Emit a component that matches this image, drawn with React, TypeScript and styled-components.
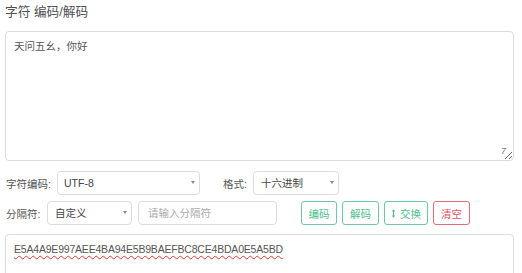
import React, { useState } from "react";
import styled, { createGlobalStyle } from "styled-components";

const Global = createGlobalStyle`
  html, body { margin: 0; padding: 0; background: #fff; }
  body { font-family: "Liberation Sans", "Noto Sans CJK SC", sans-serif; color: #555; }
  * { box-sizing: border-box; }
`;

const Page = styled.div`
  width: 522px;
  padding: 2px 8px 0 5px;
  display: flex;
  flex-direction: column;
`;

const Title = styled.h3`
  margin: 0;
  font-size: 12.7px;
  font-weight: normal;
  line-height: 20px;
  color: #505050;
`;

const AreaWrap = styled.div<{ $mt: number }>`
  position: relative;
  margin-top: ${(p) => p.$mt}px;
`;

const Area = styled.textarea<{ $h: number; $wavy?: boolean }>`
  display: block;
  width: 509px;
  height: ${(p) => p.$h}px;
  border: 1px solid #dcdcdc;
  border-radius: 4px;
  padding: 6px 8px;
  font-family: "Liberation Sans", "Noto Sans CJK SC", sans-serif;
  font-size: 10.5px;
  line-height: 16px;
  letter-spacing: ${(p) => (p.$wavy ? "-0.2px" : "0")};
  color: #555;
  outline: none;
  resize: vertical;
  text-decoration: ${(p) => (p.$wavy ? "underline wavy #e53935" : "none")};
  text-underline-offset: 2px;
  text-decoration-thickness: 1px;
`;

const Counter = styled.span`
  position: absolute;
  right: 8px;
  bottom: 5px;
  font-size: 9px;
  font-style: italic;
  color: #777;
`;

const Row = styled.div<{ $mt: number }>`
  display: flex;
  align-items: center;
  margin-top: ${(p) => p.$mt}px;
  height: 24px;
`;

const Label = styled.span<{ $w: number; $ml?: number }>`
  width: ${(p) => p.$w}px;
  margin-left: ${(p) => p.$ml ?? 0}px;
  padding-left: 1px;
  font-size: 10.5px;
  color: #555;
  white-space: nowrap;
  flex: none;
`;

const SelectBox = styled.div<{ $w: number }>`
  position: relative;
  width: ${(p) => p.$w}px;
  height: 24px;
  flex: none;
`;

const NativeSelect = styled.select<{ $pl: number }>`
  appearance: none;
  width: 100%;
  height: 100%;
  border: 1px solid #dcdcdc;
  border-radius: 4px;
  background: #fff;
  padding: 0 18px 0 ${(p) => p.$pl}px;
  font-family: "Liberation Sans", "Noto Sans CJK SC", sans-serif;
  font-size: 10.5px;
  color: #444;
  outline: none;
`;

const Caret = styled.span`
  position: absolute;
  right: 5px;
  top: 10px;
  width: 0;
  height: 0;
  border-left: 2.5px solid transparent;
  border-right: 2.5px solid transparent;
  border-top: 3.5px solid #8a8a8a;
  pointer-events: none;
`;

const TextInput = styled.input`
  width: 139px;
  height: 24px;
  margin-left: 6px;
  border: 1px solid #dcdcdc;
  border-radius: 4px;
  padding: 0 9px;
  font-family: "Liberation Sans", "Noto Sans CJK SC", sans-serif;
  font-size: 10.5px;
  color: #444;
  outline: none;
  flex: none;
  &::placeholder { color: #a8a8a8; }
`;

const Buttons = styled.div`
  display: flex;
  gap: 5px;
  margin-left: 24px;
`;

const Btn = styled.button<{ $danger?: boolean; $w: number }>`
  width: ${(p) => p.$w}px;
  height: 24px;
  padding: 0;
  display: flex;
  align-items: center;
  justify-content: center;
  gap: 4px;
  background: #fff;
  border: 1px solid ${(p) => (p.$danger ? "#e46b78" : "#6cc9a1")};
  color: ${(p) => (p.$danger ? "#e0505f" : "#4fbf8e")};
  border-radius: 3px;
  font-family: "Liberation Sans", "Noto Sans CJK SC", sans-serif;
  font-size: 10.5px;
  cursor: pointer;
`;

const SwapIcon = () => (
  <svg width="5" height="9" viewBox="0 0 5 9" aria-hidden="true">
    <path d="M2.5 0.3 L4.3 2.5 H3 V6.5 H4.3 L2.5 8.7 L0.7 6.5 H2 V2.5 H0.7 Z" fill="#4fbf8e" />
  </svg>
);

export default function App() {
  const [input, setInput] = useState("天问五幺，你好");
  const [output, setOutput] = useState("E5A4A9E997AEE4BA94E5B9BAEFBC8CE4BDA0E5A5BD");
  return (
    <Page>
      <Global />
      <Title>字符 编码/解码</Title>
      <AreaWrap $mt={9}>
        <Area $h={130} value={input} spellCheck={false} onChange={(e) => setInput(e.target.value)} />
        <Counter>7</Counter>
      </AreaWrap>
      <Row $mt={10}>
        <Label $w={52}>字符编码:</Label>
        <SelectBox $w={143}>
          <NativeSelect $pl={6} defaultValue="UTF-8">
            <option>UTF-8</option>
            <option>GBK</option>
          </NativeSelect>
          <Caret />
        </SelectBox>
        <Label $w={31} $ml={22}>格式:</Label>
        <SelectBox $w={86}>
          <NativeSelect $pl={7} defaultValue="十六进制">
            <option>十六进制</option>
            <option>二进制</option>
          </NativeSelect>
          <Caret />
        </SelectBox>
      </Row>
      <Row $mt={6}>
        <Label $w={42}>分隔符:</Label>
        <SelectBox $w={85}>
          <NativeSelect $pl={7} defaultValue="自定义">
            <option>自定义</option>
            <option>空格</option>
          </NativeSelect>
          <Caret />
        </SelectBox>
        <TextInput placeholder="请输入分隔符" />
        <Buttons>
          <Btn $w={36}>编码</Btn>
          <Btn $w={37}>解码</Btn>
          <Btn $w={44}>
            <SwapIcon />
            交换
          </Btn>
          <Btn $w={37} $danger>清空</Btn>
        </Buttons>
      </Row>
      <AreaWrap $mt={9}>
        <Area $h={100} $wavy value={output} spellCheck={false} onChange={(e) => setOutput(e.target.value)} />
      </AreaWrap>
    </Page>
  );
}
